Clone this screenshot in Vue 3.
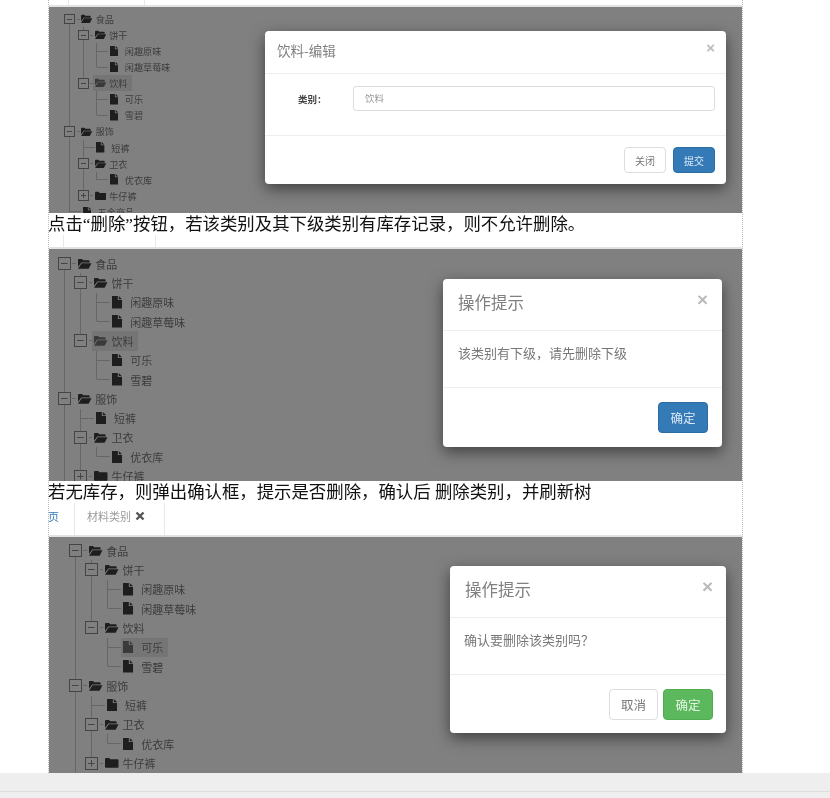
<script setup>
const tree = [
  { name: '食品', kids: [
    { name: '饼干', kids: [{ name: '闲趣原味' }, { name: '闲趣草莓味' }] },
    { name: '饮料', id: 'drink', kids: [{ name: '可乐', id: 'cola' }, { name: '雪碧' }] },
  ] },
  { name: '服饰', kids: [
    { name: '短裤' },
    { name: '卫衣', kids: [{ name: '优衣库' }] },
    { name: '牛仔裤', closed: true },
  ] },
  { name: '五金商品' },
]

function flatten(nodes, guides = [], depth = 0) {
  const rows = []
  nodes.forEach((n, i) => {
    const last = i === nodes.length - 1
    const line = depth === 0 && i === 0 ? 'line-down' : last ? 'line-up' : 'line-full'
    rows.push({ ...n, guides, line, branch: !!n.kids || n.closed })
    if (n.kids) rows.push(...flatten(n.kids, [...guides, !last], depth + 1))
  })
  return rows
}
const rows = flatten(tree)

const panels = [
  { cls: 'p1', active: 'drink', modal: 'm1', title: '饮料-编辑', form: true,
    buttons: [{ t: '关闭', c: 'plain' }, { t: '提交', c: 'blue' }] },
  { cls: 'p2', active: 'drink', modal: 'm2', title: '操作提示', body: '该类别有下级，请先删除下级',
    buttons: [{ t: '确定', c: 'blue' }] },
  { cls: 'p3', active: 'cola', modal: 'm3', title: '操作提示', body: '确认要删除该类别吗？',
    buttons: [{ t: '取消', c: 'plain' }, { t: '确定', c: 'green' }] },
]
const notes = [
  '点击“删除”按钮，若该类别及其下级类别有库存记录，则不允许删除。',
  '若无库存，则弹出确认框，提示是否删除，确认后 删除类别，并刷新树',
]
</script>

<template>
  <div class="page">
    <div class="doc">
      <div class="strip s1"><span class="tab"></span></div>

      <template v-for="(p, pi) in panels" :key="p.cls">
        <section class="panel" :class="p.cls">
          <div class="tree">
            <div v-for="r in rows" :key="r.name" class="row">
              <span v-for="(g, gi) in r.guides" :key="gi" class="cell" :class="{ 'line-full': g }"></span>
              <span class="cell" :class="[r.line, { leaf: !r.branch }]">
                <span v-if="r.branch" class="toggle" :class="{ closed: r.closed }"></span>
              </span>
              <i class="tail" :class="{ 'tail-leaf': !r.branch }"></i>
              <span class="label" :class="{ active: r.id === p.active }">
                <span class="ico" :class="{ 'ico-leaf': !r.branch }">
                  <svg v-if="r.closed" class="folder" viewBox="0 0 14 12"><path d="M0 2.200C0 1.400.5 1 1.200 1h3.200l1.200 1.400h7.200c.7 0 1.200.5 1.200 1.200V10c0 .7-.5 1.100-1.200 1.100H1.200C.5 11.100 0 10.700 0 10z" /></svg>
                  <svg v-else-if="r.branch" class="folder" viewBox="0 0 14 12"><path d="M0 2c0-.7.5-1.100 1.200-1.100h3L5.400 2.300h5.700c.6 0 1 .4 1 1V4.500H3.400L0 9z" /><path d="M3.800 5.400H14l-3 5.700H0z" /></svg>
                  <svg v-else class="file" viewBox="0 0 10 12"><path d="M0 0h5.600v3.800h4V12H0z" /><path d="M6.500 0l3.100 3H6.500z" /></svg>
                </span>
                {{ r.name }}
              </span>
            </div>
          </div>

          <div class="modal" :class="p.modal">
            <header class="m-head">
              <h4>{{ p.title }}</h4>
              <span class="close">×</span>
            </header>
            <div class="m-body">
              <div v-if="p.form" class="field">
                <label>类别：</label>
                <div class="input">饮料</div>
              </div>
              <p v-else>{{ p.body }}</p>
            </div>
            <footer class="m-foot">
              <button v-for="b in p.buttons" :key="b.t" class="btn" :class="b.c">{{ b.t }}</button>
            </footer>
          </div>
        </section>

        <template v-if="pi < notes.length">
          <p class="note">{{ notes[pi] }}</p>
          <div v-if="pi === 0" class="strip s2"><span class="tab"></span></div>
          <div v-else class="strip s3">
            <span class="home">页</span>
            <span class="tab">材料类别
              <svg class="x" viewBox="0 0 10 10"><path d="M1.500 1.500l7 7M8.500 1.500l-7 7" /></svg>
            </span>
          </div>
        </template>
      </template>
    </div>
    <div class="foot-bar"></div>
  </div>
</template>

<style scoped>
.page {
  width: 830px;
  height: 798px;
  overflow: hidden;
  background: #fff;
  font-family: "Noto Sans CJK SC", "Liberation Sans", sans-serif;
}
.doc {
  width: 695px;
  margin-left: 48px;
  box-sizing: border-box;
  border-left: 1px dotted #bbb;
  border-right: 1px dotted #bbb;
}

/* tab strips between the pasted pictures */
.strip {
  display: flex;
  box-sizing: border-box;
  border-bottom: 2px solid #e2e2e2;
  filter: blur(.4px);
}
.strip .tab {
  box-sizing: border-box;
  border-left: 1px solid #e8e8e8;
  border-right: 1px solid #e8e8e8;
}
.s1 { height: 7px; }
.s1 .tab { margin-left: 19px; width: 77px; }
.s2 { height: 14px; }
.s2 .tab { margin-left: 14px; width: 93px; }
.s3 { height: 34px; align-items: stretch; }
.home {
  width: 26px;
  margin-left: -1px;
  color: #337ab7;
  font-size: 11px;
  line-height: 26px;
}
.s3 .tab {
  width: 91px;
  padding-left: 12px;
  color: #999;
  font-size: 11px;
  line-height: 26px;
  background: #fff;
}
.x {
  width: 10px;
  height: 10px;
  margin-left: 2px;
  fill: none;
  stroke: #555;
  stroke-width: 2.4;
}

.note {
  margin: 0 0 0 -1px;
  height: 22px;
  color: #111;
  font-family: "Liberation Serif", "Noto Sans CJK SC", serif;
  font-size: 17.400px;
  line-height: 22px;
  white-space: pre;
  filter: blur(.25px);
}

/* greyed picture */
.panel {
  position: relative;
  overflow: hidden;
  background: #808080;
}
.p1 { height: 206px; }
.p2 { height: 232px; }
.p3 { height: 236px; }

.tree {
  color: #3c3c3c;
  filter: blur(.4px);
}
.p1 .tree { font-size: 9.150px; padding: 4px 0 0 14px; }
.p2 .tree { font-size: 11px; padding: 5px 0 0 7px; }
.p3 .tree { font-size: 11px; padding: 4px 0 0 18px; }

.row {
  display: flex;
  align-items: center;
  height: 1.757em;
}
.cell {
  flex: none;
  display: flex;
  align-items: center;
  justify-content: center;
  width: 1.480em;
  height: 100%;
  background-repeat: no-repeat;
  background-image: linear-gradient(#666, #666);
  background-size: 0 0;
}
.line-full { background-size: 1px 100%; background-position: center; }
.line-up { background-size: 1px 50%; background-position: center top; }
.line-down { background-size: 1px 50%; background-position: center bottom; }
.cell.leaf {
  background-image: linear-gradient(#666, #666), linear-gradient(#666, #666);
  background-size: 1px 100%, 50% 1px;
  background-position: center, right center;
}
.cell.leaf.line-up {
  background-size: 1px 50%, 50% 1px;
  background-position: center top, right center;
}

.toggle {
  flex: none;
  width: 1.180em;
  height: 1.180em;
  box-sizing: border-box;
  border: 1px solid #444;
  background:
    linear-gradient(#444, #444) center / 60% 1px no-repeat,
    #808080;
}
.toggle.closed {
  background:
    linear-gradient(#444, #444) center / 60% 1px no-repeat,
    linear-gradient(#444, #444) center / 1px 60% no-repeat,
    #808080;
}
.tail {
  flex: none;
  width: .36em;
  height: 1px;
  background: #666;
}
.tail-leaf { width: .5em; }
.label {
  display: flex;
  align-items: center;
  height: 100%;
  padding: 0 .45em 0 .18em;
  white-space: nowrap;
}
.label.active { background: #757575; }
.ico {
  flex: none;
  display: flex;
  align-items: center;
  width: 1.550em;
}
.ico-leaf { width: 1.640em; }
.folder { width: 1.230em; height: 1.060em; fill: #1e1e1e; }
.file { width: .950em; height: 1.140em; fill: #1e1e1e; }
.label.active svg { fill: #3a3a3a; }

/* dialogs float above the picture */
.modal {
  position: absolute;
  display: flex;
  flex-direction: column;
  box-sizing: border-box;
  background: #fff;
  border-radius: 4px;
  box-shadow: 0 5px 15px rgba(0, 0, 0, .5);
  filter: blur(.35px);
}
.m1 { left: 216px; top: 24px; width: 461px; height: 153px; }
.m2 { left: 394px; top: 30px; width: 279px; height: 168px; }
.m3 { left: 401px; top: 29px; width: 276px; height: 167px; }

.m-head {
  display: flex;
  justify-content: space-between;
  box-sizing: border-box;
  border-bottom: 1px solid #eee;
}
.m-head h4 {
  margin: 0;
  color: #808080;
  font-weight: 400;
}
.close {
  color: #bbb;
  font-family: "Liberation Sans", sans-serif;
  font-weight: 700;
  line-height: 1;
}
.m1 .m-head { height: 43px; padding: 9px 11px 0 12px; }
.m1 h4 { font-size: 13.500px; line-height: 20px; }
.m1 .close { font-size: 15px; }
.m2 .m-head,
.m3 .m-head { height: 52px; padding: 11px 14px 0 15px; }
.m2 h4,
.m3 h4 { font-size: 16.500px; line-height: 24px; }
.m2 .close,
.m3 .close { font-size: 19px; }
.m3 .m-head { padding-left: 15px; padding-right: 13px; }

.m-body { box-sizing: border-box; border-bottom: 1px solid #eee; }
.m-body p { margin: 0; color: #777; font-size: 13px; line-height: 20px; }
.m1 .m-body { height: 62px; padding: 12px 11px 0 33px; }
.m2 .m-body { height: 57px; padding: 12px 15px 0; }
.m3 .m-body { height: 57px; padding: 12px 14px 0; }

.field { display: flex; align-items: center; }
.field label {
  width: 55px;
  color: #444;
  font-size: 9.500px;
  font-weight: 700;
}
.input {
  flex: 1;
  box-sizing: border-box;
  height: 25px;
  padding-left: 11px;
  border: 1px solid #ddd;
  border-radius: 3px;
  color: #999;
  font-size: 9.500px;
  line-height: 23px;
}

.m-foot {
  flex: 1;
  display: flex;
  justify-content: flex-end;
  align-items: flex-start;
}
.m1 .m-foot { gap: 7px; padding: 11px 11px 0 0; }
.m2 .m-foot { gap: 5px; padding: 14px 14px 0 0; }
.m3 .m-foot { gap: 5px; padding: 14px 13px 0 0; }

.btn {
  box-sizing: border-box;
  padding: 0;
  border: 1px solid transparent;
  border-radius: 4px;
  font-family: inherit;
}
.m1 .btn { width: 42px; height: 26px; font-size: 10px; }
.m2 .btn,
.m3 .btn { width: 50px; height: 31px; font-size: 12.500px; }
.m3 .plain { width: 49px; }
.plain { background: #fff; border-color: #ddd; color: #777; }
.blue { background: #337ab7; border-color: #2e6da4; color: #dce8f3; }
.green { background: #5cb85c; border-color: #4cae4c; color: #e5f5e5; }

.foot-bar {
  height: 25px;
  box-sizing: border-box;
  padding-top: 18px;
  background: #eee;
}
.foot-bar::after {
  content: "";
  display: block;
  height: 1px;
  background: #ddd;
}
</style>
